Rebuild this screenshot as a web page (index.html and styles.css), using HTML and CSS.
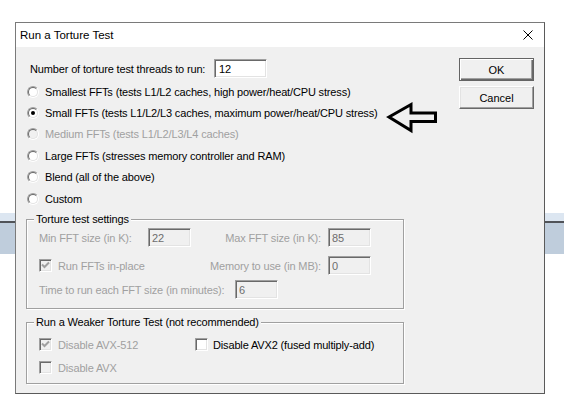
FILE: index.html
```html
<!DOCTYPE html>
<html lang="en">
<head>
    <meta charset="UTF-8">
    <title>Run a Torture Test</title>
    <link rel="stylesheet" href="styles.css">
</head>
<body>
    <div class="desktop">
        <div class="backdrop-bar"></div>

        <div class="dialog">
            <div class="titlebar">
                <span class="title">Run a Torture Test</span>
                <svg class="close-icon" width="10" height="10" viewBox="0 0 10 10">
                    <path d="M0.5 0.5 L9.5 9.5 M9.5 0.5 L0.5 9.5" stroke="#000" stroke-width="1" fill="none"/>
                </svg>
            </div>

            <div class="dialog-body">
                <div class="main-col">
                    <div class="threads-row">
                        <span class="threads-label">Number of torture test threads to run:</span>
                        <input class="field threads-input" type="text" value="12">
                    </div>

                    <div class="options">
                        <div class="option"><span class="radio"><span class="radio-inner"></span></span>Smallest FFTs (tests L1/L2 caches, high power/heat/CPU stress)</div>
                        <div class="option"><span class="radio checked"><span class="radio-inner"></span></span>Small FFTs (tests L1/L2/L3 caches, maximum power/heat/CPU stress)</div>
                        <div class="option disabled"><span class="radio"><span class="radio-inner"></span></span>Medium FFTs (tests L1/L2/L3/L4 caches)</div>
                        <div class="option"><span class="radio"><span class="radio-inner"></span></span>Large FFTs (stresses memory controller and RAM)</div>
                        <div class="option"><span class="radio"><span class="radio-inner"></span></span>Blend (all of the above)</div>
                        <div class="option"><span class="radio"><span class="radio-inner"></span></span>Custom</div>
                    </div>

                    <fieldset class="group">
                        <legend>Torture test settings</legend>
                        <div class="settings-body">
                            <div class="settings-grid disabled">
                                <span>Min FFT size (in K):</span>
                                <input class="field" type="text" value="22" disabled>
                                <span class="right-label">Max FFT size (in K):</span>
                                <input class="field" type="text" value="85" disabled>

                                <span class="check-line span-2"><span class="checkbox checked"><svg width="9" height="9" viewBox="0 0 9 9"><path d="M1 3.5 L3.5 6 L8 1.5" stroke="#a0a0a0" stroke-width="2" fill="none"/></svg></span>Run FFTs in-place</span>
                                <span class="right-label">Memory to use (in MB):</span>
                                <input class="field" type="text" value="0" disabled>
                            </div>
                            <div class="time-row disabled">
                                <span class="time-label">Time to run each FFT size (in minutes):</span>
                                <input class="field" type="text" value="6" disabled>
                            </div>
                        </div>
                    </fieldset>

                    <fieldset class="group weaker-group">
                        <legend>Run a Weaker Torture Test (not recommended)</legend>
                        <div class="weaker-grid">
                            <span class="check-line disabled"><span class="checkbox checked"><svg width="9" height="9" viewBox="0 0 9 9"><path d="M1 3.5 L3.5 6 L8 1.5" stroke="#a0a0a0" stroke-width="2" fill="none"/></svg></span>Disable AVX-512</span>
                            <span class="check-line"><span class="checkbox enabled"></span>Disable AVX2 (fused multiply-add)</span>
                            <span class="check-line disabled"><span class="checkbox"></span>Disable AVX</span>
                        </div>
                    </fieldset>
                </div>

                <div class="button-col">
                    <button class="btn btn-default">OK</button>
                    <button class="btn">Cancel</button>
                </div>
            </div>

            <!-- hand-drawn pointer from the screenshot -->
            <svg class="pointer-arrow" width="56" height="36" viewBox="0 0 56 36">
                <path d="M4 17 L26 4.5 L26 13 L50.5 13 L50.5 21.5 L26 21.5 L26 30.5 Z" stroke="#000" stroke-width="3" stroke-linejoin="miter" fill="none"/>
            </svg>
        </div>
    </div>
</body>
</html>
```

FILE: styles.css
```css
body {
    margin: 0;
    background: #fff;
    font-family: "Liberation Sans", Arial, sans-serif;
    font-size: 11px;
    letter-spacing: -0.15px;
    color: #000;
}

.desktop {
    position: relative;
    width: 564px;
    height: 414px;
    overflow: hidden;
}

.backdrop-bar {
    margin-top: 213px;
    height: 41px;
    background: linear-gradient(#dce6f1 0 8px, #505358 8px 10px, #bfcddc 10px);
}

.dialog {
    position: absolute;
    left: 15px;
    top: 22px;
    width: 528px;
    height: 370px;
    border: 1px solid #7a7a7a;
    border-right-color: #5a5a5a;
    border-bottom-color: #5a5a5a;
    background: #f0f0f0;
}

.titlebar {
    height: 24px;
    background: #fff;
    display: flex;
    align-items: center;
    justify-content: space-between;
    padding: 0 11px 0 4px;
    font-size: 11.5px;
    letter-spacing: 0;
}

.dialog-body {
    display: flex;
    justify-content: space-between;
    padding: 12px 10px 0 11px;
}

.main-col {
    width: 380px;
}

.threads-row {
    display: flex;
    align-items: center;
    height: 19px;
    padding-left: 3px;
}

.threads-label {
    width: 184px;
}

.field {
    box-sizing: border-box;
    height: 19px;
    margin: 0;
    padding: 0 0 0 3px;
    border: 1px solid;
    border-color: #a0a0a0 #fff #fff #a0a0a0;
    box-shadow: inset 1px 1px 0 #696969, inset -1px -1px 0 #e3e3e3;
    background: #fff;
    font-family: inherit;
    font-size: 11px;
    color: #000;
    outline: none;
}

.field:disabled {
    background: #f0f0f0;
    color: #6d6d6d;
}

.threads-input {
    width: 53px;
    padding-left: 4px;
}

.options {
    margin-top: 3px;
}

.option {
    display: flex;
    align-items: center;
    height: 21.4px;
}

.disabled,
.disabled .check-line {
    color: #a0a0a0;
}

.radio {
    box-sizing: border-box;
    width: 12px;
    height: 12px;
    margin-right: 6px;
    border-radius: 50%;
    border: 1px solid;
    border-color: #a0a0a0 #fff #fff #a0a0a0;
    display: flex;
}

.radio-inner {
    flex: 1;
    border-radius: 50%;
    border: 1px solid;
    border-color: #696969 #e3e3e3 #e3e3e3 #696969;
    background: #fff;
    display: flex;
    align-items: center;
    justify-content: center;
}

.option.disabled .radio-inner {
    background: #f0f0f0;
}

.radio.checked .radio-inner::after {
    content: "";
    width: 4px;
    height: 4px;
    border-radius: 50%;
    background: #000;
}

.group {
    box-sizing: border-box;
    width: 378px;
    min-width: 0;
    margin: 4px 0 0 -1px;
    padding: 0;
    border: 1px solid #a0a0a0;
    box-shadow: 1px 1px 0 #fff, inset 1px 1px 0 #fff;
}

.group legend {
    margin-left: 7px;
    padding: 0 2px;
    line-height: 13px;
    background: #f0f0f0;
}

.settings-body {
    padding: 2px 0 9px 12px;
}

.settings-grid {
    display: grid;
    grid-template-columns: 109px 43px 137px 43px;
    grid-auto-rows: 19px;
    row-gap: 9px;
    align-items: center;
}

.settings-grid .field {
    width: 43px;
}

.span-2 {
    grid-column: span 2;
}

.right-label {
    text-align: right;
    padding-right: 7px;
}

.time-row {
    display: flex;
    align-items: center;
    height: 19px;
    margin-top: 5px;
}

.time-label {
    width: 196px;
}

.time-row .field {
    width: 43px;
}

.weaker-group {
    margin-top: 7px;
}

.weaker-grid {
    display: grid;
    grid-template-columns: 156px auto;
    grid-auto-rows: 19px;
    row-gap: 4px;
    align-items: center;
    padding: 6px 0 6px 12px;
}

.check-line {
    display: flex;
    align-items: center;
}

.checkbox {
    box-sizing: border-box;
    width: 13px;
    height: 13px;
    margin-right: 6px;
    border: 1px solid;
    border-color: #a0a0a0 #fff #fff #a0a0a0;
    box-shadow: inset 1px 1px 0 #696969, inset -1px -1px 0 #e3e3e3;
    background: #f0f0f0;
    display: flex;
    align-items: center;
    justify-content: center;
}

.checkbox.enabled {
    background: #fff;
}

.weaker-grid .check-line:nth-child(2) .checkbox {
    margin-right: 5px;
}

.button-col {
    display: flex;
    flex-direction: column;
    gap: 5px;
    margin-top: -1px;
}

.btn {
    box-sizing: border-box;
    width: 75px;
    height: 23px;
    margin: 0;
    padding: 0;
    border: 1px solid;
    border-color: #fff #696969 #696969 #fff;
    box-shadow: inset -1px -1px 0 #a0a0a0, inset 1px 1px 0 #e3e3e3;
    background: #f0f0f0;
    font-family: inherit;
    font-size: 11px;
    color: #000;
}

.btn-default {
    border-color: #646464;
    box-shadow: inset 1px 1px 0 #fff, inset -1px -1px 0 #696969, inset -2px -2px 0 #a0a0a0;
}

.pointer-arrow {
    position: absolute;
    left: 369px;
    top: 77px;
}
```
